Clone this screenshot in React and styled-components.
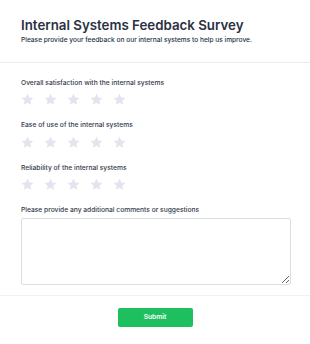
import React from 'react'
import styled, { createGlobalStyle } from 'styled-components'

const GlobalStyle = createGlobalStyle`
    body {
        margin: 0;
        background: #fff;
        font-family: Inter, "Liberation Sans", sans-serif;
    }
`;

const questions = [
    'Overall satisfaction with the internal systems',
    'Ease of use of the internal systems',
    'Reliability of the internal systems'
]

const Star = () => (
    <svg width="13" height="13" viewBox="0 0 24 24">
        <path
            d="M12 1l3.3 7.1 7.7.9-5.7 5.2 1.6 7.6L12 18l-6.9 3.8 1.6-7.6L1 9l7.7-.9z"
            fill="#e3e4ee"
        />
    </svg>
)

const App = () => {
    return (
        <Survey>
            <GlobalStyle />
            <Header>
                <Title>Internal Systems Feedback Survey</Title>
                <Subtitle>Please provide your feedback on our internal systems to help us improve.</Subtitle>
            </Header>
            <Form>
                {questions.map((q) => (
                    <Question key={q}>
                        <Label>{q}</Label>
                        <Stars>
                            {[1, 2, 3, 4, 5].map((n) => (
                                <StarButton key={n} type="button"><Star /></StarButton>
                            ))}
                        </Stars>
                    </Question>
                ))}
                <Question>
                    <Label>Please provide any additional comments or suggestions</Label>
                    <Comments />
                </Question>
            </Form>
            <Footer>
                <SubmitButton type="button">Submit</SubmitButton>
            </Footer>
        </Survey>
    )
}

const Survey = styled.div`
    width: 310px;
    color: #2d3446;
`;

const Header = styled.div`
    padding: 17px 21px 17px;
    border-bottom: 1px solid #ebecef;
`;

const Title = styled.h1`
    margin: 0 0 2px;
    font-size: 13.3px;
    font-weight: 600;
    color: #2b3142;
    line-height: 17px;
`;

const Subtitle = styled.p`
    margin: 0;
    font-size: 6.6px;
    font-weight: 500;
    color: #253247;
    line-height: 8.5px;
`;

const Form = styled.div`
    padding: 16px 21px 10px;
    display: flex;
    flex-direction: column;
    gap: 15px;
`;

const Question = styled.div`
    display: flex;
    flex-direction: column;
`;

const Label = styled.label`
    font-size: 6.7px;
    font-weight: 500;
    color: #333a4a;
    line-height: 8.5px;
    margin-bottom: 6px;
`;

const Stars = styled.div`
    display: flex;
    gap: 10px;
`;

const StarButton = styled.button`
    border: none;
    background: none;
    padding: 0;
    display: flex;
    cursor: pointer;
`;

const Comments = styled.textarea`
    box-sizing: border-box;
    width: 270px;
    height: 67px;
    margin-top: -3px;
    border: 1px solid #dcdee6;
    border-radius: 2px;
    font-family: inherit;
    outline: none;
`;

const Footer = styled.div`
    border-top: 1px solid #f0f1f3;
    padding: 12px 0 17px;
    display: flex;
    justify-content: center;
`;

const SubmitButton = styled.button`
    width: 75px;
    height: 19px;
    border: none;
    border-radius: 2px;
    background: #1dbf5f;
    color: #fff;
    font-family: inherit;
    font-size: 6.7px;
    font-weight: 600;
    cursor: pointer;
`;

export default App
